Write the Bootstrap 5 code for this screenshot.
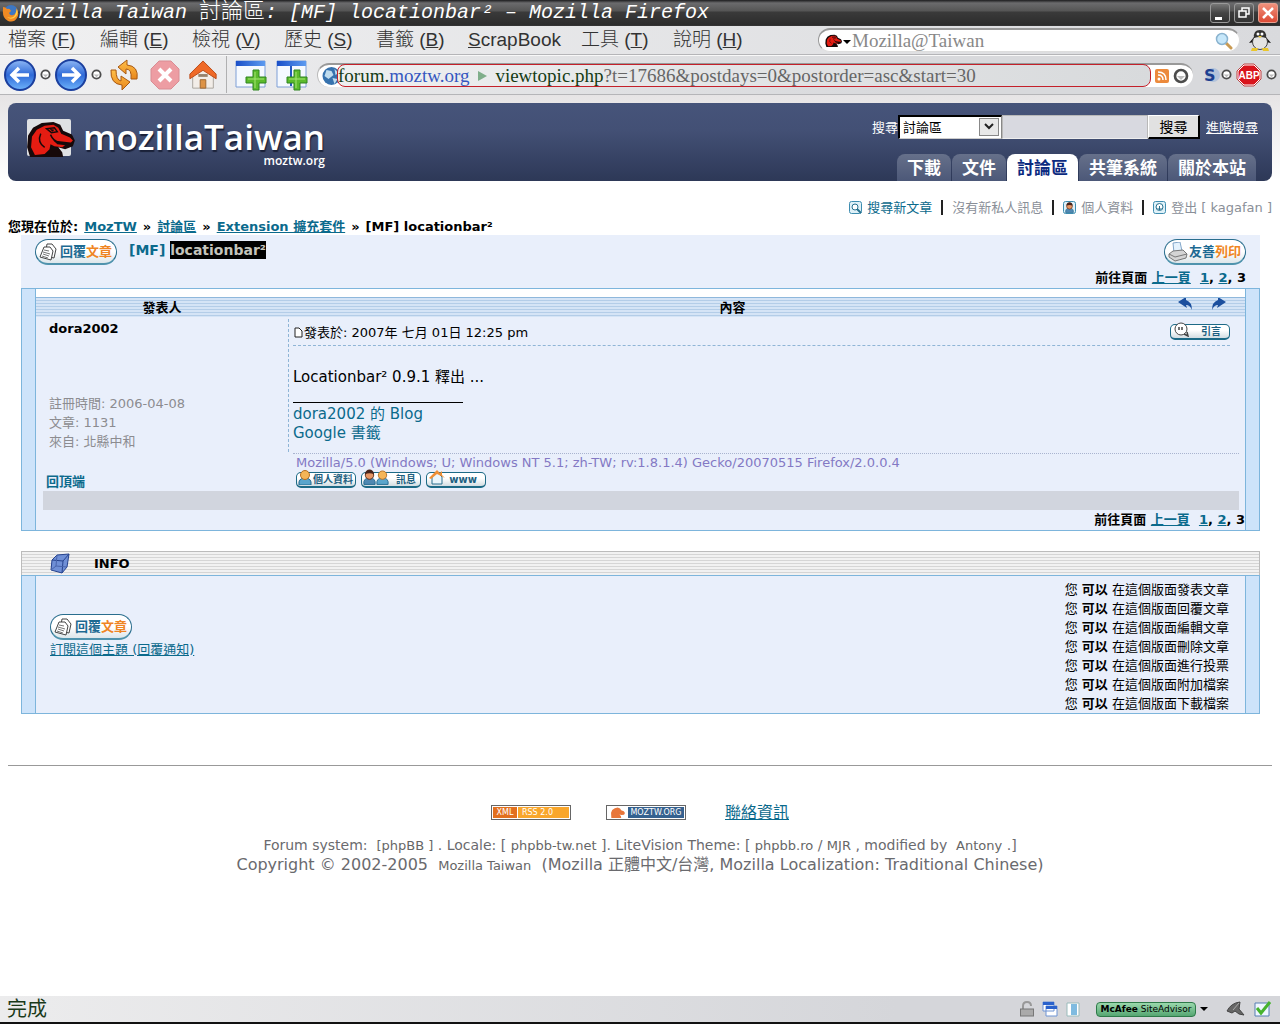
<!DOCTYPE html>
<html lang="zh-Hant-TW">
<head>
<meta charset="utf-8">
<meta name="viewport" content="width=device-width, initial-scale=1">
<title>Mozilla Taiwan 討論區: [MF] locationbar²</title>
<link href="https://cdn.jsdelivr.net/npm/bootstrap@5.3.0/dist/css/bootstrap.min.css" rel="stylesheet">
<style>
body{font-family:"DejaVu Sans","Noto Sans CJK TC",sans-serif;font-size:13px;line-height:19px;color:#000;background:#fff}
a{color:#0b6a8c}
svg{display:block;flex:none}
button{font-family:inherit}
/* window chrome */
.titlebar{height:26px;background:linear-gradient(#1c1c1e 0,#6b6b6d 3px,#555 11px,#3a3a3a 12px,#2c2c2c 100%);color:#fff;font-family:"Liberation Mono","Noto Sans CJK TC",monospace;font-size:20px;font-style:italic;line-height:26px;padding:0 2px;border-bottom:1px solid #333}
.titlebar .han{font-size:22px;font-style:normal;font-weight:300;line-height:20px}
.winbtn{width:20px;height:20px;border:1px solid #999;border-radius:3px;background:linear-gradient(#777,#444 50%,#333);padding:0}
.winbtn.closer{background:linear-gradient(#f0917c,#dc4a35);border-color:#e8a090}
.menubar{height:29px;background:linear-gradient(90deg,#f0f0f1,#d9dadd);border-bottom:1px solid #b5b5b8;padding-left:8px;padding-right:8px}
.menubar a{color:#333;text-decoration:none;font:300 19px/28px "Liberation Sans","Noto Sans CJK TC",sans-serif;min-width:92px;white-space:nowrap}
.menubar a.wide{min-width:113px}
.quickfind{width:422px;height:24px;background:#fff;border:1px solid #ddd;border-top:2px solid #999;border-left-color:#999;border-radius:12px;padding:0 6px}
.quickfind input{border:0;outline:0;background:none;font:19px/20px "Liberation Serif",serif;min-width:0;padding:0}
.quickfind input::placeholder{color:#888;opacity:1}
.toolbar{height:40px;background:linear-gradient(90deg,#f1f1f2,#d8d9dc 70%);border-top:1px solid #f8f8f8;border-bottom:1px solid #b5b5b8;padding:0 3px 1px 4px}
.toolbar button{border:0;background:none;padding:0}
.addr{height:24px;background:#fff;border-radius:12px;border-top:2px solid #999;border-left:1px solid #bbb;padding-right:4px}
.addr .red{height:23px;border:1px solid #c4202a;border-radius:8px;background:linear-gradient(90deg,#eeeff0,#d8dadc);font:19px/20px "Liberation Serif",serif;white-space:nowrap;overflow:hidden;color:#666;margin-left:-4px}
.addr a{text-decoration:none;color:#143b14}
.addr a b{color:#3557c0;font-weight:400}
/* site */
.site{background:linear-gradient(#e6e4e5,#fff 85px);padding:8px 8px 0;min-height:901px}
.masthead{height:78px;border-radius:8px;background:linear-gradient(#46547a 0,#435075 35%,#2d3857 100%);padding:0 14px 0 18px}
.wordmark{font:600 35px/36px "Open Sans",sans-serif;color:#fff;text-shadow:1px 2px 1px #1a2138}
.subword{font:600 12px/12px "Open Sans",sans-serif;color:#fff}
.finder{height:24px;margin-top:12px;color:#fff;font-size:13px}
.finder select{width:104px;height:24px;border:2px solid #000;border-right:1px solid #888;border-bottom:1px solid #ccc;background:#fff;font-size:13px;appearance:none;padding:0 3px;color:#000;border-radius:0}
.selwrap{position:relative}
.selwrap svg{position:absolute;right:3px;top:3px;pointer-events:none}
.finder input{width:146px;height:24px;border:1px solid #b8b8b8;border-bottom-color:#eee;background:#d8d9e0;border-radius:0}
.finder button{width:52px;height:24px;background:#e1e1e1;border:1px solid #fff;border-right:2px solid #000;border-bottom:2px solid #000;padding:0;font-size:14px;line-height:18px;margin-right:6px;color:#000}
.finder a{color:#fff}
.sitetabs{gap:1px;padding-right:2px}
.sitetabs a{background:linear-gradient(#66708a,#4c5878);color:#fff;font-weight:700;font-size:17px;line-height:29px;height:27px;padding:0 10px;border-radius:8px 8px 0 0;text-decoration:none}
.sitetabs a.on{background:#fff;color:#0b2a80}
.userbar{height:19px;margin-top:17px;color:#8a8f98}
.userbar a{text-decoration:none;color:#8a8f98}
.userbar .live{color:#0b6a8c}
.vbar{width:2px;height:15px;background:#222;margin:0 9px}
.crumbs{font-weight:700;font-size:13px;gap:6px;height:18px}
.frame{margin:0 12px 0 13px}
.topichead{background:#e9effb;height:53px;padding:0 14px}
.pager{font-weight:700;line-height:20px;white-space:nowrap}
.pill{width:82px;height:26px;border:1px solid #2a6e8e;border-bottom:2px solid #4f93ad;border-radius:13px;background:linear-gradient(#fff 50%,#dde6ea);color:#1d6a92;font-size:13px;font-weight:700;line-height:22px;padding:0 4px 0 3px;white-space:nowrap}
.pill i{font-style:normal;color:#ef8523}
.topichead h1{font-size:14px;line-height:22px}
.hl{display:inline-block;line-height:18px;background:#000;color:#c4c4bc}
.postbox{border:1px solid #7db5dc;background:#e9effb}
.rail{width:14px;flex:none;background:#cde3fa}
.rail.l{border-right:1px solid #7db5dc}.rail.r{border-left:1px solid #7db5dc}
.striped{height:20px;border-top:1px solid #8fb8dc;background:repeating-linear-gradient(#d5e4f6 0 2px,#b4cde8 2px 3px);font-weight:700}
.lift{background:#fff}
.who{width:252px;flex:none}
.namecell{padding:2px 13px 0}
.topcell{padding:20px 10px 0}
.muted2{color:#8c8c90}
.say{border-left:1px dashed #8fb5d6;margin-top:2px;padding:0 15px 0 4px;height:133px}
.dateline{border-bottom:1px dashed #8fb5d6;height:27px}
.said{font-size:15px;padding-top:22px}
.said a{text-decoration:none}
.sigline{width:170px;height:1px;background:#000;margin:15px 0 2px}
.agent{border-top:1px dotted #a9b4cf;color:#8379c4;margin:1px 6px 0 5px;padding-left:3px;height:19px;line-height:18px}
.mini{width:60px;height:16px;border:1px solid #1d6a86;border-bottom-width:2px;border-radius:5px;background:linear-gradient(#fff 40%,#d3dde2);color:#1d5f80;font-size:10px;font-weight:700;line-height:13px;padding:0 2px 0 1px;white-space:nowrap}
.mini svg{margin-top:-4px}
.links3{gap:5px;padding-bottom:3px}
.greybar{height:19px;background:#d1d5de;margin:0 6px 0 7px}
.infosec{margin-top:20px}
.infohead{height:24px;border:1px solid #bbb;border-bottom:0;background:repeating-linear-gradient(#f1f1f1 0 2px,#d5d5d5 2px 3px);font-weight:700}
.infobody{height:139px}
.subscribe{padding:38px 0 0 14px}
.rule{height:1px;background:#999;margin-top:51px}
/* footer */
.foot{color:#6a6a6e;text-align:center;white-space:nowrap}
.foot p{margin:0}
.foot p a{color:#666;text-decoration:none;font-size:13px}
.foot .one{font-size:14px}.foot .two{font-size:16px}
.badges{gap:35px;height:24px;margin:34px 0 12px}
.badge80{width:80px;height:15px;border:1px solid #666;padding:1px;background:#fff;font:8px/11px "DejaVu Sans",sans-serif;color:#fff;text-decoration:none}
.xml{background:#e2701f;width:24px;text-align:center}
.rss{background:#f9a62b;flex:1;padding-left:4px;margin-left:1px;text-align:left}
.moz{background:#35618f;flex:1;text-align:center}
.contact{font-size:16px}
.statusbar{height:28px;background:linear-gradient(90deg,#ececed,#d5d6da 70%);border-bottom:2px solid #111;font-size:20px;line-height:26px;padding:0 7px;color:#1a3a1a}
.mcafee{width:100px;height:15px;border:1px solid #2d7a48;border-radius:4px;background:linear-gradient(#9bd8ac,#55a672);font:9px/12px "DejaVu Sans",sans-serif;color:#000;white-space:nowrap;padding:0}
</style>
<script src="https://cdn.jsdelivr.net/npm/bootstrap@5.3.0/dist/js/bootstrap.bundle.min.js"></script>
</head>
<body>
<svg width="0" height="0" class="position-absolute" aria-hidden="true">
<defs>
<linearGradient id="blue" x2="0" y2="1"><stop offset="0" stop-color="#8fb8f5"/><stop offset=".5" stop-color="#2f6ad8"/><stop offset="1" stop-color="#6fb4fb"/></linearGradient>
<linearGradient id="orange" x2="0" y2="1"><stop offset="0" stop-color="#ffc04a"/><stop offset="1" stop-color="#e8861a"/></linearGradient>
<linearGradient id="bar" x2="1"><stop offset="0" stop-color="#1a4fc8"/><stop offset="1" stop-color="#5d9bf0"/></linearGradient>
<symbol id="dot" viewBox="0 0 12 12"><circle cx="6" cy="6" r="4.500" fill="#fff" stroke="#4c4c4c" stroke-width="2"/><path d="M3 6h6L6 9z" fill="#bbb"/></symbol>
<symbol id="papers" viewBox="0 0 18 18"><path d="M8 1h5l4 5-2 9-9-2z" fill="#fff" stroke="#444"/><path d="M5 4h6l3 4-2 9-11-3z" fill="#fff" stroke="#444"/><path d="M5 7l5 1M4 9l7 2M4 11l6 2M3 13l6 2" stroke="#777"/></symbol>
<symbol id="rex" viewBox="0 0 50 38"><path d="M4 38L1 28 2 16 7 8 16 3l12-1 7 3 3 6 9 4 3 6-2 6-8 3-7-2 4 5 1 5z" fill="#16090a"/><path d="M9 36L5 28 6 17l5-7 8-4 9-1 5 3 3 6 9 4 3 3-2 2-9-1-9-1 4 4 8 1-3 2-8-1-4-2-1 5-5 5z" fill="#e51c12"/><path d="M21 9l8-1 3 4-6 1zM15 14q-4 9 4 14M25 15q3 7 9 8" fill="none" stroke="#16090a" stroke-width="1.500"/><path d="M24 9l5 1-2 2z" fill="#16090a"/></symbol>
<symbol id="man" viewBox="0 0 14 16"><path d="M1 16q-1-7 6-7t6 7z" fill="#5aa5cc" stroke="#256a90"/><circle cx="7" cy="6" r="4.500" fill="#f4b558" stroke="#b46d22"/></symbol>
<symbol id="man2" viewBox="0 0 14 16"><path d="M1 16q-1-7 6-7t6 7z" fill="#4f88b2" stroke="#256a90"/><circle cx="7" cy="6" r="4.500" fill="#e79664" stroke="#5b2a16"/><path d="M2 5q1-5 5-5t5 5q-5-2-10 0" fill="#47231a"/></symbol>
<symbol id="addwin" viewBox="0 0 33 32"><path d="M1 2h29v26H1z" fill="#f5f9ff" stroke="#7f9fd6"/><path d="M1 2h29v5H1z" fill="url(#bar)"/></symbol>
<symbol id="plus" viewBox="0 0 33 32"><path d="M18 11h6v7h7v6h-7v7h-6v-7h-7v-6h7z" fill="#5cbb2c" stroke="#2f8420"/><path d="M20 13v16M13 20h16" stroke="#a5e474"/></symbol>
</defs>
</svg>

<header>
<div class="titlebar d-flex align-items-center">
 <svg width="17" height="18" viewBox="0 0 17 18"><circle cx="9" cy="8" r="7" fill="#3d77c4"/><path d="M1 3q3 0 4 2 3-1 4 2l-2 2q1 3 4 2 4-1 3-7 4 5 1 10-3 5-9 3-6-3-5-12z" fill="#f08a24"/><path d="M15 5q2 6-3 9-4 2-7-1 6 2 8-2z" fill="#ffd046"/></svg>
 <div class="flex-grow-1 text-nowrap">Mozilla Taiwan <span class="han">討論區</span>: [MF] locationbar² – Mozilla Firefox</div>
 <div class="d-flex gap-1">
  <button class="winbtn" aria-label="最小化"><svg width="18" height="18"><path d="M4 13h7v3H4z" fill="#fff"/></svg></button>
  <button class="winbtn" aria-label="還原"><svg width="18" height="18"><path d="M7 7V4h7v6h-3M4 7h7v6H4z" fill="none" stroke="#fff" stroke-width="1.500"/></svg></button>
  <button class="winbtn closer" aria-label="關閉"><svg width="18" height="18"><path d="M4 4l10 10M14 4L4 14" stroke="#fff" stroke-width="2.500"/></svg></button>
 </div>
</div>
<nav class="menubar d-flex align-items-center">
 <a href="#">檔案 (<u>F</u>)</a><a href="#">編輯 (<u>E</u>)</a><a href="#">檢視 (<u>V</u>)</a><a href="#">歷史 (<u>S</u>)</a><a href="#">書籤 (<u>B</u>)</a><a href="#" class="wide"><u>S</u>crapBook</a><a href="#">工具 (<u>T</u>)</a><a href="#">說明 (<u>H</u>)</a>
 <div class="quickfind d-flex align-items-center ms-auto">
  <svg width="17" height="15"><use href="#rex"/></svg>
  <svg width="10" height="8" viewBox="0 0 10 8"><path d="M1 3h8L5 7z"/></svg>
  <input class="flex-grow-1" placeholder="Mozilla@Taiwan" aria-label="Mozilla@Taiwan">
  <svg width="18" height="18" viewBox="0 0 18 18"><path d="M11 11l5 5" stroke="#c99a52" stroke-width="3" stroke-linecap="round"/><circle cx="7" cy="7" r="5.500" fill="#c6e7fa" stroke="#8ab3cf" stroke-width="1.500"/></svg>
 </div>
 <svg class="ms-2" width="24" height="22" viewBox="0 0 24 22"><path d="M7 7L1 14l5-1zM17 7l6 7-5-1z" fill="#111"/><ellipse cx="12" cy="13" rx="7.500" ry="7.500" fill="#e4e4e4" stroke="#444"/><path d="M6 9q-1-8 6-8t6 8q-6-2-12 0" fill="#333"/><circle cx="10" cy="5" r="1.500" fill="#fff"/><circle cx="14" cy="5" r="1.500" fill="#fff"/><path d="M10 7h4l-2 2zM4 19h6l-1 3H3zM14 19h6l1 3h-6z" fill="#e9c62c"/></svg>
</nav>
<div class="toolbar d-flex align-items-center">
 <div class="d-flex align-items-center gap-1">
 <button aria-label="上一頁"><svg width="32" height="32" viewBox="0 0 32 32"><circle cx="16" cy="16" r="15" fill="url(#blue)" stroke="#1b3f9e" stroke-width="2"/><path d="M25 16H9M15 9l-7 7 7 7" fill="none" stroke="#fff" stroke-width="3.500"/></svg></button>
 <svg width="11" height="11"><use href="#dot"/></svg>
 <button aria-label="下一頁"><svg width="32" height="32" viewBox="0 0 32 32"><circle cx="16" cy="16" r="15" fill="url(#blue)" stroke="#1b3f9e" stroke-width="2"/><path d="M7 16h16M17 9l7 7-7 7" fill="none" stroke="#fff" stroke-width="3.500"/></svg></button>
 <svg width="11" height="11"><use href="#dot"/></svg>
 </div>
 <button class="ms-2" aria-label="重新載入"><svg width="28" height="32" viewBox="0 0 28 32"><path d="M27 20q2-13-10-14V1L8 8l8 7v-5q6 0 5 10z" fill="url(#orange)" stroke="#a85812"/><path d="M1 11q-1 14 11 15v5l8-8-9-6v5q-5-1-5-11z" fill="url(#orange)" stroke="#a85812"/></svg></button>
 <button class="ms-2 ps-1" aria-label="停止"><svg width="30" height="30" viewBox="0 0 30 30"><path d="M9 1h12l8 8v12l-8 8H9l-8-8V9z" fill="#ed9da3" stroke="#d98c93"/><path d="M9 9l12 12M21 9L9 21" stroke="#fff" stroke-width="4"/></svg></button>
 <button class="ms-2" aria-label="首頁"><svg width="30" height="32" viewBox="0 0 32 32"><path d="M5 15v15h22V15L16 6z" fill="#f2ede8" stroke="#a8a29c"/><path d="M16 1L2 15v5l14-9 14 9v-5z" fill="#ef6a28" stroke="#b94714"/><path d="M13 21h6v9h-6z" fill="#dd9346" stroke="#9c6531"/><path d="M11 15h10v3H11z" fill="#96826c"/></svg></button>
 <div class="vr mx-2"></div>
 <button aria-label="新視窗"><svg width="33" height="32"><use href="#addwin"/><use href="#plus"/></svg></button>
 <button class="ms-2" aria-label="新分頁"><svg width="33" height="32"><use href="#addwin"/><path d="M15 7v20" stroke="#2358be" stroke-width="2"/><use href="#plus"/></svg></button>
 <div class="addr d-flex align-items-center flex-grow-1 ms-2">
  <svg width="23" height="20" viewBox="0 0 22 20"><circle cx="13" cy="10" r="9" fill="#3672ae"/><path d="M8 4l5 1 2 4-5 4-4-3zM16 3l4 4-3 2zM14 12l5 1-3 5z" fill="#bfdcee"/></svg>
  <div class="red flex-grow-1 d-flex align-items-center"><a href="#">forum.<b>moztw.org</b></a><svg class="mx-2" width="10" height="12"><path d="M1 1l9 5-9 5z" fill="#7fae8a"/></svg><a href="#">viewtopic.php</a>?t=17686&amp;postdays=0&amp;postorder=asc&amp;start=30</div>
  <svg class="ms-1" width="14" height="14"><rect width="14" height="14" rx="2" fill="#ec8a3c"/><circle cx="4" cy="10" r="1.500" fill="#fff"/><path d="M3 6q5 0 5 5M3 3q8 0 8 8" fill="none" stroke="#fff" stroke-width="1.500"/></svg>
  <svg class="ms-1" width="16" height="16"><use href="#dot"/></svg>
 </div>
 <svg class="ms-2" width="20" height="18" viewBox="0 0 20 18"><circle cx="12" cy="9" r="7" fill="#b4c3da"/><text x="3" y="15" font-family="DejaVu Sans" font-weight="700" font-size="16" fill="#1c3f90">S</text></svg>
 <svg width="11" height="11"><use href="#dot"/></svg>
 <svg class="ms-1" width="26" height="24" viewBox="0 0 26 24"><path d="M8 1h10l7 7v8l-7 7H8l-7-7V8z" fill="#d9141c" stroke="#b44"/><path d="M8 2h10l6 6v8l-6 6H8l-6-6V8z" fill="none" stroke="#fff"/><text x="13" y="16" text-anchor="middle" font-family="Liberation Sans" font-weight="700" font-size="10" fill="#fff">ABP</text></svg>
 <svg class="ms-1" width="11" height="11"><use href="#dot"/></svg>
</div>
</header>

<main class="site">
<div class="masthead d-flex justify-content-between">
 <div class="d-flex pt-3">
  <svg width="49" height="38" viewBox="0 0 49 38"><rect x="1" width="44" height="37" rx="2" fill="#dfe1e3"/><use href="#rex" x="0" y="1" width="49" height="37"/></svg>
  <div class="ps-2 text-end"><div class="wordmark">mozillaTaiwan</div><div class="subword">moztw.org</div></div>
 </div>
 <div class="d-flex flex-column justify-content-between align-items-end">
  <form class="finder d-flex align-items-center">
   <label for="scope">搜尋</label>
   <div class="selwrap"><select id="scope"><option>討論區</option></select><svg width="20" height="18"><rect x=".5" y=".5" width="19" height="17" fill="#e8e8e8" stroke="#888"/><path d="M6 6l4 4 4-4" fill="none" stroke="#222" stroke-width="2"/></svg></div>
   <input type="text" aria-label="搜尋字串"><button type="button">搜尋</button><a href="#">進階搜尋</a>
  </form>
  <nav class="sitetabs d-flex"><a href="#">下載</a><a href="#">文件</a><a href="#" class="on">討論區</a><a href="#">共筆系統</a><a href="#">關於本站</a></nav>
 </div>
</div>
<nav class="userbar d-flex justify-content-end align-items-center">
 <svg class="me-1" width="14" height="14"><rect x=".5" y=".5" width="12" height="12" rx="2" fill="#dff1f8" stroke="#3e8db0"/><circle cx="6" cy="6" r="3" fill="#fff" stroke="#28718f"/><path d="M8 8l4 4" stroke="#28718f" stroke-width="2"/></svg><a href="#" class="live">搜尋新文章</a><span class="vbar"></span>
 <a href="#">沒有新私人訊息</a><span class="vbar"></span>
 <svg class="me-1" width="14" height="14"><rect x=".5" y=".5" width="12" height="12" rx="2" fill="#dff1f8" stroke="#3e8db0"/><use href="#man2" x="2" y="1" width="9" height="11"/></svg><a href="#">個人資料</a><span class="vbar"></span>
 <svg class="me-1" width="14" height="14"><rect x=".5" y=".5" width="12" height="12" rx="2" fill="#dff1f8" stroke="#3e8db0"/><circle cx="6.500" cy="6" r="3.500" fill="#fff" stroke="#28718f"/><path d="M6.500 5v4M4.500 7l2 2 2-2" stroke="#28718f" fill="none"/></svg><a href="#">登出 [ kagafan ]</a>
</nav>
<div class="crumbs d-flex text-nowrap"><span>您現在位於:</span><a href="#">MozTW</a><span>»</span><a href="#">討論區</a><span>»</span><a href="#">Extension 擴充套件</a><span>»</span><span>[MF] locationbar²</span></div>

<div class="frame">
 <div class="topichead d-flex justify-content-between">
  <div class="d-flex pt-1 align-items-start"><button class="pill d-flex align-items-center justify-content-between me-2"><svg width="18" height="18"><use href="#papers"/></svg><span>回覆<i>文章</i></span></button>
  <h1 class="fw-bold m-0 ps-1"><a href="#" class="text-decoration-none">[MF]</a> <span class="hl">locationbar²</span></h1></div>
  <div class="d-flex flex-column align-items-end justify-content-between pt-1"><button class="pill d-flex align-items-center justify-content-between"><svg width="20" height="20" viewBox="0 0 20 20"><path d="M5 1l7-1 2 9-8 2z" fill="#e4f2fd" stroke="#83a7c9"/><path d="M1 12l4-3 10-1 4 4-1 4-11 3-6-4z" fill="#d4d4d4" stroke="#777"/><path d="M1 12l6 3 12-3" fill="none" stroke="#777"/></svg><span>友善<i>列印</i></span></button>
  <div class="pager">前往頁面 <a href="#">上一頁</a>&nbsp; <a href="#">1</a>, <a href="#">2</a>, 3</div></div>
 </div>
 <section class="postbox d-flex">
  <div class="rail l"></div>
  <div class="flex-grow-1">
   <div class="lift pt-2"><div class="striped d-flex"><div class="who text-center">發表人</div><div class="flex-grow-1 text-center">內容</div>
    <svg width="68" height="18" viewBox="0 0 68 18"><g fill="#1b4f9e"><path d="M1 4l8-5v3q6 2 6 10-2-5-6-5l1 3z"/><path d="M49 4l-8-5v3q-6 2-6 10 2-5 6-5l-1 3z"/></g></svg></div></div>
   <div class="d-flex">
    <div class="who namecell"><div class="fw-bold">dora2002</div><div class="muted2 mt-5 pt-2">註冊時間: 2006-04-08<br>文章: 1131<br>來自: 北縣中和</div></div>
    <div class="say flex-grow-1">
     <div class="dateline d-flex align-items-center"><svg width="11" height="11"><path d="M2 1h4l3 3v6H2z" fill="#fff" stroke="#222"/></svg><span class="flex-grow-1">發表於: 2007年 七月 01日 12:25 pm</span>
      <button class="mini d-flex justify-content-between pe-2"><svg width="18" height="16"><circle cx="9" cy="8" r="6" fill="#fff" stroke="#444"/><path d="M12 13l4 2-1-4M7 6v3M10 6v3" stroke="#444" stroke-width="1.500" fill="none"/></svg>引言</button></div>
     <div class="said"><div>Locationbar² 0.9.1 釋出 ...</div><div class="sigline"></div><a href="#">dora2002 的 Blog</a><br><a href="#">Google 書籤</a></div>
    </div>
   </div>
   <div class="d-flex">
    <div class="who topcell"><a class="fw-bold text-decoration-none" href="#">回頂端</a></div>
    <div class="flex-grow-1"><div class="agent">Mozilla/5.0 (Windows; U; Windows NT 5.1; zh-TW; rv:1.8.1.4) Gecko/20070515 Firefox/2.0.0.4</div>
     <div class="d-flex ps-2 links3"><button class="mini d-flex justify-content-between"><svg width="14" height="16"><use href="#man"/></svg>個人資料</button><button class="mini d-flex justify-content-between pe-1"><span class="d-flex"><svg width="13" height="16"><use href="#man2"/></svg><svg width="13" height="16"><use href="#man"/></svg></span>訊息</button><button class="mini d-flex justify-content-between pe-2"><svg width="18" height="16"><path d="M4 8v7h10V8L9 3z" fill="#eaf5fb" stroke="#2a6e8e"/><path d="M1 9l8-8 3 3 2-2v4l3 3-8-4-6 5z" fill="#ef8f34"/></svg>www</button></div></div>
   </div>
   <div class="greybar"></div>
   <div class="pager text-end">前往頁面 <a href="#">上一頁</a>&nbsp; <a href="#">1</a>, <a href="#">2</a>, 3</div>
  </div>
  <div class="rail r"></div>
 </section>

 <section class="infosec">
  <div class="infohead d-flex align-items-center ps-4"><svg class="ms-1 me-4" width="20" height="22" viewBox="0 0 20 22"><path d="M2 7l5-5 12-1-2 13-5 6-11-3z" fill="#6f8fd6" stroke="#26438e"/><path d="M2 7l11 1 6-7M13 8l-1 12" fill="none" stroke="#26438e"/><path d="M7 2L6 13l-5 4M6 13l11 1" fill="none" stroke="#4864ac"/></svg>INFO</div>
  <div class="infobody postbox d-flex"><div class="rail l"></div>
   <div class="flex-grow-1 d-flex justify-content-between"><div class="subscribe"><button class="pill d-flex align-items-center justify-content-between"><svg width="18" height="18"><use href="#papers"/></svg><span>回覆<i>文章</i></span></button><a href="#">訂閱這個主題 (回覆通知)</a></div>
   <div class="pt-1 pe-3">您 <b>可以</b> 在這個版面發表文章<br>您 <b>可以</b> 在這個版面回覆文章<br>您 <b>可以</b> 在這個版面編輯文章<br>您 <b>可以</b> 在這個版面刪除文章<br>您 <b>可以</b> 在這個版面進行投票<br>您 <b>可以</b> 在這個版面附加檔案<br>您 <b>可以</b> 在這個版面下載檔案</div></div>
   <div class="rail r"></div></div>
 </section>
</div>
<div class="rule"></div>
<footer class="foot">
 <div class="d-flex justify-content-center align-items-center badges">
  <a href="#" class="badge80 d-flex"><span class="xml">XML</span><span class="rss">RSS 2.0</span></a>
  <a href="#" class="badge80 d-flex"><svg width="20" height="11" viewBox="-6 0 62 38"><path d="M2 38L1 20 5 10 14 4l10-2 8 3 4 6 9 4 4 6-3 6-9 1-7-2 5 5 1 7z" fill="#e8763a"/></svg><span class="moz">MOZTW.ORG</span></a>
  <a href="#" class="contact ms-1">聯絡資訊</a>
 </div>
 <p class="one">Forum system: &nbsp;<a href="#">[phpBB ]</a> . Locale: [ <a href="#">phpbb-tw.net</a> ]. LiteVision Theme: [ <a href="#">phpbb.ro</a> / <a href="#">MJR</a> , modified by &nbsp;<a href="#">Antony</a> .]</p>
 <p class="two">Copyright © 2002-2005 &nbsp;<a href="#">Mozilla Taiwan</a>&nbsp; (Mozilla 正體中文/台灣, Mozilla Localization: Traditional Chinese)</p>
</footer>
</main>
<div class="statusbar d-flex align-items-center">
 <span class="flex-grow-1">完成</span>
 <svg width="14" height="16"><path d="M3 8V5q0-4 4-4t4 4" fill="none" stroke="#999" stroke-width="2"/><rect x=".5" y="8" width="13" height="7" fill="#aaa" stroke="#777"/></svg>
 <svg class="ms-2" width="16" height="16"><path d="M1 1h11v9H1zM4 5h11v10H4z" fill="#fff" stroke="#6f94d4"/><path d="M1 1h11v3H1zM4 5h11v3H4z" fill="#2a62cc"/></svg>
 <svg class="ms-2" width="14" height="15"><path d="M1 1h12v13H1z" fill="#fff" stroke="#9bb"/><path d="M5 2h6v11H5z" fill="#7fbbe0"/></svg>
 <button class="mcafee ms-3"><b>McAfee</b> SiteAdvisor</button>
 <svg class="ms-1" width="9" height="6"><path d="M0 1h8L4 5z"/></svg>
 <svg class="ms-3" width="20" height="16" viewBox="0 0 20 16"><path d="M2 10Q6 2 15 1l-1 7 5 6-5-1-4-3-3 2z" fill="#666" stroke="#444"/><path d="M14 2l-6 7" stroke="#aaa"/></svg>
 <svg class="ms-2" width="20" height="18" viewBox="0 0 20 18"><path d="M2 3h14v13H2z" fill="#eef6ff" stroke="#567fb2"/><path d="M4 8l4 5L17 2" fill="none" stroke="#47b32e" stroke-width="3"/></svg>
</div>
</body>
</html>
